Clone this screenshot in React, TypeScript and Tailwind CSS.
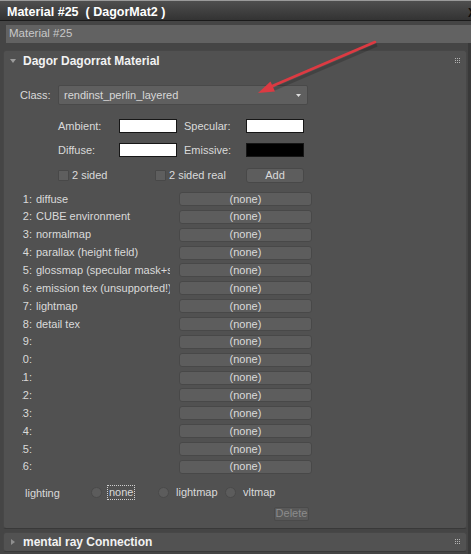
import React from "react";

function Dots() {
  return (
    <div className="grid grid-cols-3 gap-[1px] w-[5px] h-[5px]">
      {Array.from({ length: 9 }).map((_, i) => (
        <div key={i} className="w-[1px] h-[1px] bg-[#b4b4b4]" />
      ))}
    </div>
  );
}

function Radio({ label, focus }: { label: string; focus?: boolean }) {
  return (
    <div className="w-[67px] flex items-center shrink-0">
      <div className="w-[11px] h-[11px] rounded-full bg-[#5c5c5c] border border-[#4a4a4a] shrink-0" />
      {focus ? (
        <div className="ml-[5px] h-[15px] px-[1px] flex items-center border border-dotted border-[#d0d0d0]">
          {label}
        </div>
      ) : (
        <div className="ml-[7px]">{label}</div>
      )}
    </div>
  );
}

function Check({ label, w }: { label: string; w: string }) {
  return (
    <div className={`flex items-center shrink-0 ${w}`}>
      <div className="w-[11px] h-[11px] bg-[#5e5e5e] border border-[#484848] rounded-[1px] shrink-0" />
      <div className="ml-[3px]">{label}</div>
    </div>
  );
}

const slots: [string, string][] = [
  ["1:", "diffuse"],
  ["2:", "CUBE environment"],
  ["3:", "normalmap"],
  ["4:", "parallax (height field)"],
  ["5:", "glossmap (specular mask+shininess)"],
  ["6:", "emission tex (unsupported!)"],
  ["7:", "lightmap"],
  ["8:", "detail tex"],
  ["9:", ""],
  ["10:", ""],
  ["11:", ""],
  ["12:", ""],
  ["13:", ""],
  ["14:", ""],
  ["15:", ""],
  ["16:", ""],
];

export default function App() {
  return (
    <div className="w-[471px] h-[554px] overflow-hidden bg-[#454545] flex flex-col relative font-['Liberation_Sans',Arial,sans-serif] text-[11px] text-[#dadada] leading-none">
      {/* Title bar */}
      <div className="h-[21px] shrink-0 border-t border-t-[#9a9a9a] border-b border-b-[#1b1b1b] bg-linear-to-b from-[#4f4f4f] to-[#333333] flex items-center pt-[4px] pl-[7px] pr-0">
        <span className="text-white font-bold text-[12.5px] whitespace-pre">Material #25  ( DagorMat2 )</span>
        <span className="ml-auto mr-[-5px] text-[#0c0c0c] font-bold text-[12px]">X</span>
      </div>

      {/* Name field */}
      <div className="mt-[4px] ml-[6px] h-[18px] shrink-0 bg-[#626262] flex items-center pl-[3px] text-[11.5px] text-[#c8c8c8]">
        Material #25
      </div>

      {/* Body */}
      <div className="flex-1 flex flex-col pl-[3px] pr-[1px] border-r-[3px] border-r-[#393939]">
        {/* Dagor panel */}
        <div className="mt-[7px] border border-[#474747] border-b-[#393939] rounded-[3px] bg-[#515151] flex flex-col pb-[7px]">
          <div className="h-[19px] flex items-center pl-[6px] pr-[6px]">
            <svg width="6" height="4" viewBox="0 0 6 4" className="shrink-0">
              <polygon points="0,0 6,0 3,4" fill="#9c9c9c" />
            </svg>
            <span className="ml-[7px] font-bold text-[12px] text-[#f2f2f2]">Dagor Dagorrat Material</span>
            <div className="ml-auto">
              <Dots />
            </div>
          </div>

          {/* Class */}
          <div className="mt-[15px] h-[20px] flex items-center pl-[16px]">
            <div className="w-[38px]">Class:</div>
            <div className="w-[250px] h-[20px] bg-[#5f5f5f] border border-[#494949] rounded-[2px] flex items-center justify-between pl-[5px] pr-[6px] text-[#d8d8d8]">
              <span>rendinst_perlin_layered</span>
              <svg width="5" height="3" viewBox="0 0 5 3">
                <polygon points="0,0 5,0 2.5,3" fill="#dedede" />
              </svg>
            </div>
          </div>

          {/* Colors */}
          <div className="mt-[14px] h-[14px] flex items-center pl-[54px]">
            <div className="w-[61px]">Ambient:</div>
            <div className="w-[58px] h-[14px] bg-white border border-[#161616]" />
            <div className="ml-[7px] w-[62px]">Specular:</div>
            <div className="w-[58px] h-[14px] bg-white border border-[#161616]" />
          </div>
          <div className="mt-[10px] h-[14px] flex items-center pl-[54px]">
            <div className="w-[61px]">Diffuse:</div>
            <div className="w-[58px] h-[14px] bg-white border border-[#161616]" />
            <div className="ml-[7px] w-[62px]">Emissive:</div>
            <div className="w-[58px] h-[14px] bg-black border border-[#161616]" />
          </div>

          {/* Checkboxes */}
          <div className="mt-[11px] h-[14px] flex items-center pl-[54px]">
            <Check label="2 sided" w="w-[97px]" />
            <Check label="2 sided real" w="w-[91px]" />
            <div className="w-[58px] h-[15px] bg-[#5d5d5d] border border-[#484848] rounded-[3px] flex items-center justify-center">
              Add
            </div>
          </div>

          {/* Slots */}
          <div className="mt-[10px] flex flex-col">
            {slots.map(([n, t]) => (
              <div key={n} className="h-[17.87px] flex items-start">
                <div className="h-[14px] flex items-center pl-[18px]">
                  <div className="w-[10px] overflow-hidden flex justify-end whitespace-nowrap shrink-0">
                    <span className="shrink-0">{n}</span>
                  </div>
                  <div className="w-[134px] ml-[4px] overflow-hidden whitespace-nowrap shrink-0">{t}</div>
                  <div className="ml-[9px] w-[133px] h-[14px] bg-[#5d5d5d] border border-[#484848] rounded-[3px] flex items-center justify-center shrink-0">
                    (none)
                  </div>
                </div>
              </div>
            ))}
          </div>

          {/* Lighting */}
          <div className="mt-[7px] h-[15px] flex items-center pl-[21px]">
            <div className="w-[66px] pt-[2px]">lighting</div>
            <Radio label="none" focus />
            <Radio label="lightmap" />
            <Radio label="vltmap" />
          </div>

          {/* Delete */}
          <div className="mt-[7px] h-[14px] flex items-center pl-[270px]">
            <div className="w-[35px] h-[14px] bg-[#595959] border border-[#4a4a4a] rounded-[2px] flex items-center justify-center text-[#8c8c8c]">
              Delete
            </div>
          </div>
        </div>

        {/* mental ray panel */}
        <div className="mt-[3px] h-[20px] border border-[#474747] border-b-[#393939] rounded-[3px] bg-[#525252] flex items-center pl-[7px] pr-[6px]">
          <svg width="4" height="6" viewBox="0 0 4 6" className="shrink-0">
            <polygon points="0,0 4,3 0,6" fill="#8e8e8e" />
          </svg>
          <span className="ml-[8px] font-bold text-[12px] text-[#f2f2f2]">mental ray Connection</span>
          <div className="ml-auto">
            <Dots />
          </div>
        </div>
      </div>

      {/* Red annotation arrow */}
      <svg className="absolute left-0 top-0 pointer-events-none" width="471" height="554" viewBox="0 0 471 554">
        <line x1="376" y1="43" x2="271" y2="88" stroke="rgba(0,0,0,0.18)" strokeWidth="3" transform="translate(1,2)" />
        <line x1="375" y1="42" x2="270" y2="87" stroke="#dc3a42" strokeWidth="2.6" strokeLinecap="round" />
        <polygon points="258,93 275,91.5 270.5,81.5" fill="#dc3a42" />
      </svg>
    </div>
  );
}
